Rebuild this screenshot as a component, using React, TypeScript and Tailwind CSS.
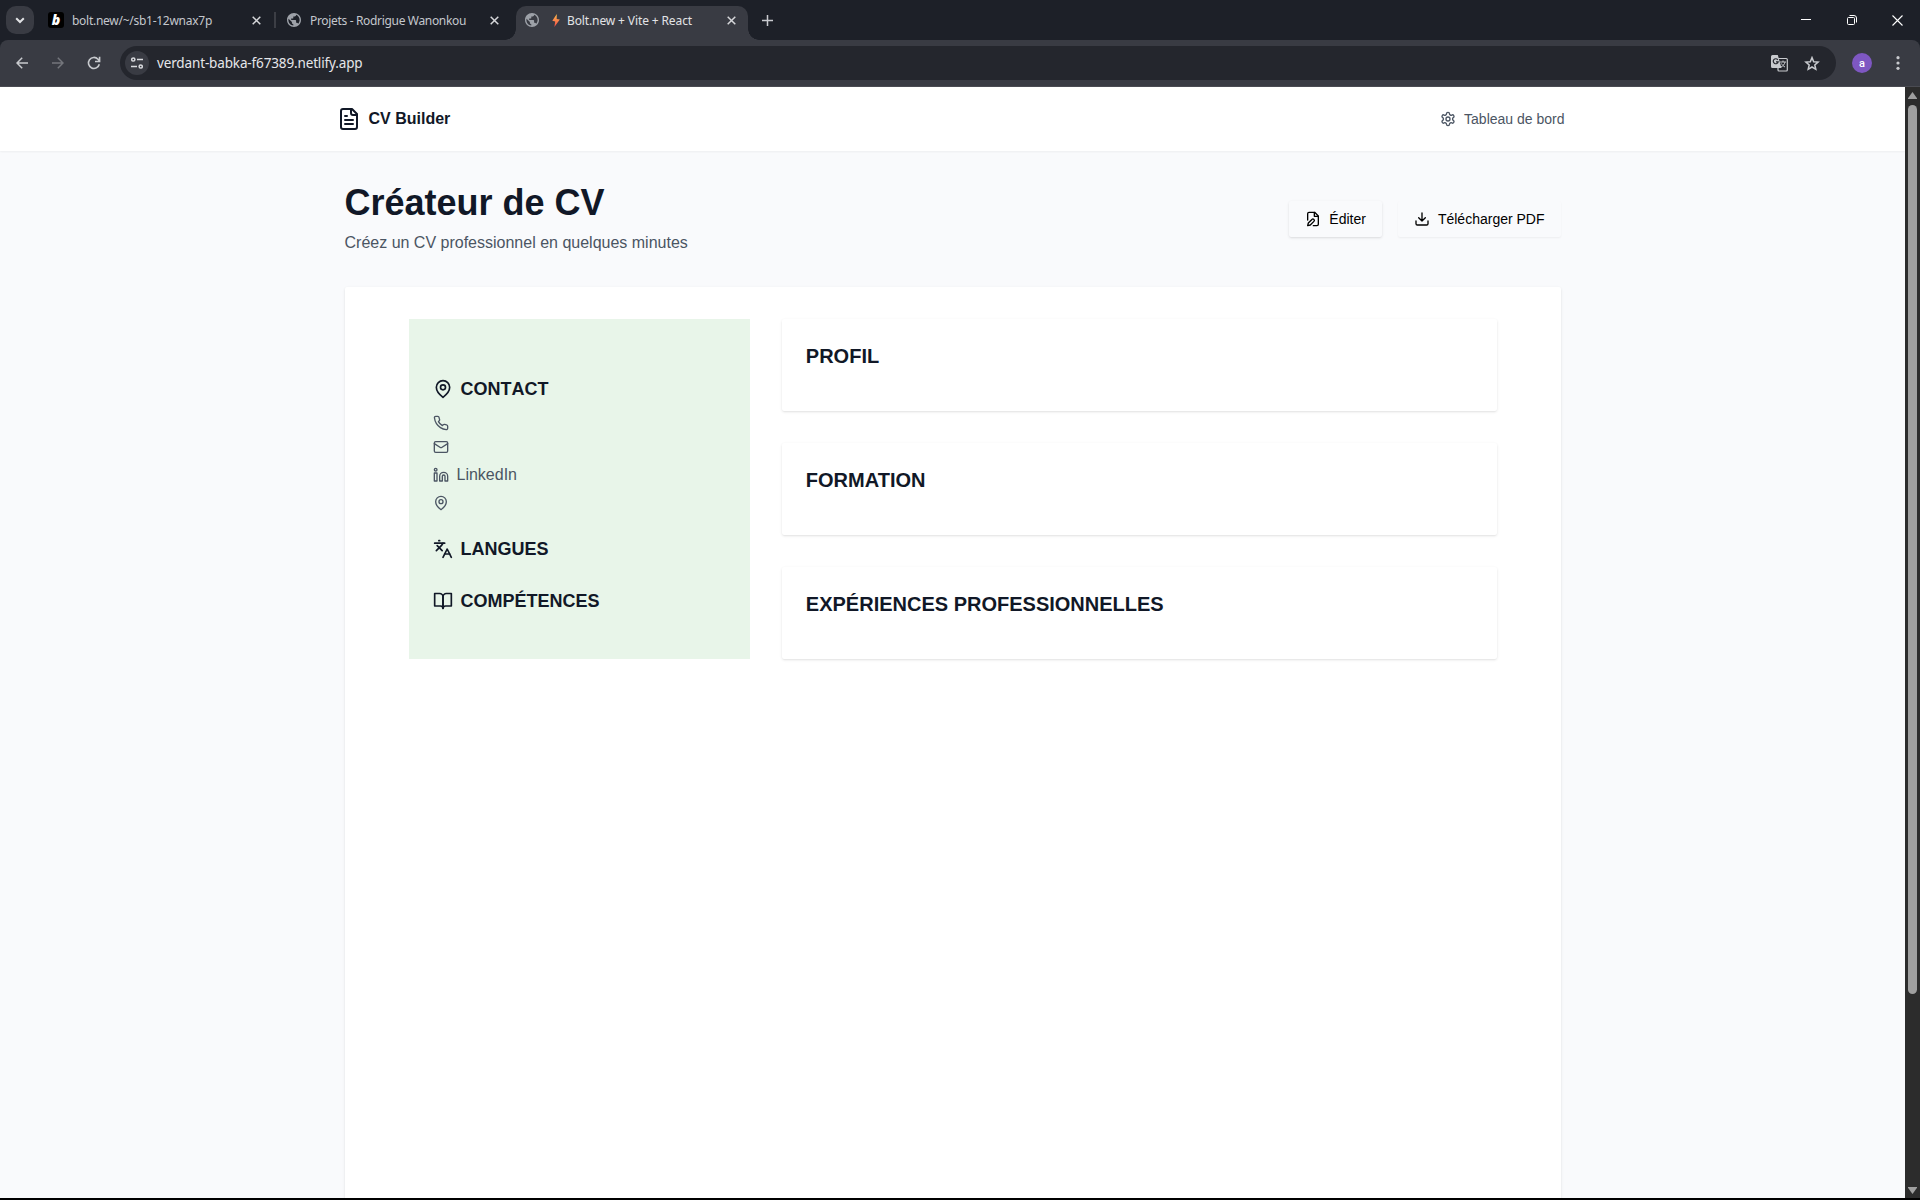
import React from 'react';
import { Languages, Linkedin } from 'lucide-react';

function Icon({ size, children }: { size: number; children: React.ReactNode }) {
  return (
    <svg width={size} height={size} viewBox="0 0 24 24" className="shrink-0" fill="none" stroke="currentColor" strokeWidth="2" strokeLinecap="round" strokeLinejoin="round">
      {children}
    </svg>
  );
}

const FileText = ({ size }: { size: number }) => (
  <Icon size={size}><path d="M15 2H6a2 2 0 0 0-2 2v16a2 2 0 0 0 2 2h12a2 2 0 0 0 2-2V7Z" /><path d="M14 2v4a2 2 0 0 0 2 2h4M10 9H8M16 13H8M16 17H8" /></Icon>
);

const Settings = ({ size }: { size: number }) => (
  <Icon size={size}><path d="M12.220 2h-.44a2 2 0 0 0-2 2v.18a2 2 0 0 1-1 1.730l-.43.25a2 2 0 0 1-2 0l-.15-.08a2 2 0 0 0-2.730.730l-.22.38a2 2 0 0 0 .730 2.730l.15.100a2 2 0 0 1 1 1.720v.510a2 2 0 0 1-1 1.740l-.15.090a2 2 0 0 0-.730 2.730l.22.380a2 2 0 0 0 2.730.730l.150-.080a2 2 0 0 1 2 0l.430.250a2 2 0 0 1 1 1.730V20a2 2 0 0 0 2 2h.440a2 2 0 0 0 2-2v-.180a2 2 0 0 1 1-1.730l.430-.250a2 2 0 0 1 2 0l.150.080a2 2 0 0 0 2.730-.730l.220-.390a2 2 0 0 0-.730-2.730l-.150-.080a2 2 0 0 1-1-1.740v-.500a2 2 0 0 1 1-1.740l.150-.090a2 2 0 0 0 .730-2.730l-.220-.380a2 2 0 0 0-2.730-.730l-.150.080a2 2 0 0 1-2 0l-.430-.250a2 2 0 0 1-1-1.730V4a2 2 0 0 0-2-2z" /><circle cx="12" cy="12" r="3" /></Icon>
);

const FileEdit = ({ size }: { size: number }) => (
  <Icon size={size}><path d="M4 13.500V4a2 2 0 0 1 2-2h8.500L20 7.500V20a2 2 0 0 1-2 2h-5.500" /><path d="M14 2v6h6" /><path d="M10.420 12.610a2.100 2.100 0 1 1 2.970 2.970L7.950 21 4 22l.990-3.950 5.430-5.440Z" /></Icon>
);

const Download = ({ size }: { size: number }) => (
  <Icon size={size}><path d="M21 15v4a2 2 0 0 1-2 2H5a2 2 0 0 1-2-2v-4" /><path d="M7 10l5 5 5-5M12 15V3" /></Icon>
);

const MapPin = ({ size }: { size: number }) => (
  <Icon size={size}><path d="M20 10c0 6-8 12-8 12s-8-6-8-12a8 8 0 0 1 16 0Z" /><circle cx="12" cy="10" r="3" /></Icon>
);

const Phone = ({ size }: { size: number }) => (
  <Icon size={size}><path d="M22 16.920v3a2 2 0 0 1-2.180 2 19.790 19.790 0 0 1-8.630-3.070 19.500 19.500 0 0 1-6-6 19.790 19.790 0 0 1-3.070-8.670A2 2 0 0 1 4.110 2h3a2 2 0 0 1 2 1.720 12.840 12.840 0 0 0 .7 2.810 2 2 0 0 1-.45 2.110L8.090 9.910a16 16 0 0 0 6 6l1.270-1.270a2 2 0 0 1 2.110-.45 12.840 12.840 0 0 0 2.810.7A2 2 0 0 1 22 16.920z" /></Icon>
);

const Mail = ({ size }: { size: number }) => (
  <Icon size={size}><rect width="20" height="16" x="2" y="4" rx="2" /><path d="m22 7-8.970 5.700a1.940 1.940 0 0 1-2.060 0L2 7" /></Icon>
);

const BookOpen = ({ size }: { size: number }) => (
  <Icon size={size}><path d="M2 3h6a4 4 0 0 1 4 4v14a3 3 0 0 0-3-3H2z" /><path d="M22 3h-6a4 4 0 0 0-4 4v14a3 3 0 0 1 3-3h7z" /></Icon>
);

function Globe() {
  return (
    <svg width="14" height="14" viewBox="2 2 20 20" className="shrink-0" fill="#9da1a8">
      <path d="M12 2C6.480 2 2 6.480 2 12s4.480 10 10 10 10-4.480 10-10S17.520 2 12 2zm-1 17.930c-3.950-.49-7-3.850-7-7.930 0-.62.080-1.210.210-1.790L9 15v1c0 1.100.9 2 2 2v1.930zm6.900-2.540c-.26-.81-1-1.390-1.900-1.390h-1v-3c0-.55-.45-1-1-1H8v-2h2c.55 0 1-.45 1-1V7h2c1.100 0 2-.9 2-2v-.41c2.930 1.190 5 4.060 5 7.410 0 2.080-.8 3.970-2.100 5.390z" />
    </svg>
  );
}

function TabClose() {
  return (
    <svg width="9" height="9" viewBox="0 0 9 9" className="shrink-0" fill="none" stroke="#d6d7da" strokeWidth="1.5">
      <path d="M.7.7l7.600 7.600M8.300.7L.7 8.300" />
    </svg>
  );
}

function TabStrip() {
  return (
    <div className="flex h-10 items-center bg-[#1d2028] text-[12px] text-[#c4c7cd]">
      <div className="ml-[6px] flex size-7 shrink-0 items-center justify-center rounded-[10px] bg-[#393b43]">
        <svg width="10" height="7" viewBox="0 0 10 7" fill="none" stroke="#e1e2e5" strokeWidth="2"><path d="M1.200 1.200L5 5l3.800-3.800" /></svg>
      </div>
      <div className="ml-[14px] flex w-[213px] shrink-0 items-center">
        <div className="flex size-4 shrink-0 items-center justify-center rounded-[3px] bg-black">
          <span className="text-[14px] leading-none font-black text-white italic">b</span>
        </div>
        <span className="ml-[8px] grow pt-[2px] tracking-[-0.27px] whitespace-nowrap">bolt.new/~/sb1-12wnax7p</span>
        <TabClose />
      </div>
      <div className="ml-[13px] h-4 w-[2px] shrink-0 bg-[#3c3e45]" />
      <div className="ml-[11px] flex w-[212px] shrink-0 items-center">
        <Globe />
        <span className="ml-[9px] grow pt-[2px] tracking-[-0.33px] whitespace-nowrap">Projets - Rodrigue Wanonkou</span>
        <TabClose />
      </div>
      <div className="flex h-10 w-[255px] shrink-0 items-end pl-[6px]">
        <div className="h-[11px] w-[11px] shrink-0 bg-[radial-gradient(circle_at_0_0,transparent_10.500px,#393b43_11px)]" />
        <div className="flex h-[34px] w-[232px] shrink-0 items-center rounded-t-[10px] bg-[#393b43] pr-[12px] pl-[9px] pb-[6px] text-[#e2e3e6]">
          <Globe />
          <svg width="8" height="13" viewBox="0 0 8 13" className="ml-[13px] shrink-0">
            <defs><linearGradient id="bolt" x1="0" y1="0" x2="0" y2="1"><stop stopColor="#ffc04a" /><stop offset="1" stopColor="#f4484a" /></linearGradient></defs>
            <path d="M4.800 0L.3 6.800l2.900.6L2.400 13 7.800 5.600l-3.100-.5Z" fill="url(#bolt)" />
          </svg>
          <span className="ml-[7px] grow pt-[2px] tracking-[-0.12px] whitespace-nowrap">Bolt.new + Vite + React</span>
          <TabClose />
        </div>
        <div className="h-[11px] w-[11px] shrink-0 bg-[radial-gradient(circle_at_100%_0,transparent_10.500px,#393b43_11px)]" />
      </div>
      <svg width="11" height="11" viewBox="0 0 11 11" className="ml-[8px] shrink-0" fill="none" stroke="#c9cacf" strokeWidth="1.500"><path d="M5.500 0v11M0 5.500h11" /></svg>
      <div className="grow" />
      <div className="mr-[17px] flex items-center text-white">
        <svg width="10" height="10" viewBox="0 0 10 10" stroke="currentColor" fill="none"><path d="M0 4.500h10" /></svg>
        <svg width="10" height="10" viewBox="0 0 10 10" className="ml-[36px]" stroke="currentColor" fill="none"><rect x=".5" y="2.500" width="7" height="7" rx="1" /><path d="M2.500.5H7A2.500 2.500 0 0 1 9.500 3v4.500" /></svg>
        <svg width="11" height="11" viewBox="0 0 11 11" className="ml-[35px]" stroke="currentColor" fill="none" strokeWidth="1.100"><path d="M.5.5l10 10M10.500.5l-10 10" /></svg>
      </div>
    </div>
  );
}

function Toolbar() {
  return (
    <div className="bg-[#1d2028]">
      <div className="flex h-[47px] items-center rounded-t-[8px] border-b border-[#4a4b52] bg-[#393b43] text-[#c8cace]">
        <svg width="12" height="12" viewBox="0 0 12 12" className="ml-[16px] shrink-0" fill="none" stroke="currentColor" strokeWidth="1.500"><path d="M12 6H1.200M6.200.8L1 6l5.200 5.200" /></svg>
        <svg width="12" height="12" viewBox="0 0 12 12" className="ml-[24px] shrink-0" fill="none" stroke="#74767c" strokeWidth="1.500"><path d="M0 6h10.800M5.800.8L11 6l-5.200 5.200" /></svg>
        <svg width="14" height="14" viewBox="0 0 14 14" className="ml-[23px] shrink-0" fill="none" stroke="currentColor" strokeWidth="1.600"><path d="M12.300 8.200A5.500 5.500 0 1 1 11 3.200L12.500 5M12.600.8v4.700H8" /></svg>
        <div className="ml-[19px] flex h-[34px] w-[1716px] shrink-0 items-center rounded-full bg-[#24262d] pr-[16px] pl-[5px]">
          <div className="flex size-6 shrink-0 items-center justify-center rounded-full bg-[#393b43]">
            <svg width="12" height="12" viewBox="0 0 12 12" fill="none" stroke="#d9dade" strokeWidth="1.500"><circle cx="2.300" cy="2.500" r="1.600" /><path d="M6 2.500h6M0 9.500h6" /><circle cx="9.700" cy="9.500" r="1.600" /></svg>
          </div>
          <span className="ml-[8px] grow text-[13.5px] tracking-[-0.14px] whitespace-nowrap text-[#e6e7ea]">verdant-babka-f67389.netlify.app</span>
          <svg width="17" height="17" viewBox="0 0 17 17" className="mt-px shrink-0">
            <rect x="7" y="3.500" width="9.300" height="12.500" rx="1" fill="none" stroke="#c8cace" strokeWidth="1.200" />
            <path d="M9 7h6M12 5.500V7M14 7c-.5 2.500-2 4-4 5M10.500 8.500c.8 1.700 2 2.700 3.500 3.500" fill="none" stroke="#c8cace" />
            <path d="M1.500 0h5.300l3.700 13H1.500A1.500 1.500 0 0 1 0 11.500v-10A1.500 1.500 0 0 1 1.500 0Z" fill="#c8cace" />
            <path d="M6.800 4.800a2.500 2.500 0 1 0 .4 2H5" fill="none" stroke="#24262d" strokeWidth="1.200" />
          </svg>
          <svg width="16" height="15" viewBox="0 0 16 15" className="ml-[16px] shrink-0" fill="none" stroke="#c8cace" strokeWidth="1.500"><path d="M8 1.600l1.700 4.100 4.400.4-3.300 2.900 1 4.300L8 11l-3.800 2.300 1-4.300L1.900 6.100l4.400-.4Z" /></svg>
        </div>
        <div className="ml-[16px] flex size-5 shrink-0 items-center justify-center rounded-full bg-[#7e57c2] font-['Roboto',sans-serif] text-[11px] leading-none font-medium text-white">a</div>
        <svg width="4" height="14" viewBox="0 0 4 14" className="ml-[24px] shrink-0" fill="#c8cace"><circle cx="2" cy="1.700" r="1.600" /><circle cx="2" cy="7" r="1.600" /><circle cx="2" cy="12.300" r="1.600" /></svg>
      </div>
    </div>
  );
}

function SideHeading({ icon, children }: { icon: React.ReactNode; children: React.ReactNode }) {
  return <h2 className="flex items-center gap-2 text-lg font-bold text-[#111827] [font-kerning:none]">{icon}{children}</h2>;
}

function Section({ title }: { title: string }) {
  return (
    <section className="h-[92px] rounded-[2px] bg-white p-6 shadow-[0_1px_3px_rgba(0,0,0,0.1),0_1px_2px_-1px_rgba(0,0,0,0.1)]">
      <h2 className="text-xl leading-[26px] font-bold text-[#111827]">{title}</h2>
    </section>
  );
}

function CvPage() {
  return (
    <div className="grow overflow-hidden bg-[#f9fafc]">
      <nav className="relative h-16 bg-white shadow-[0_1px_2px_rgba(0,0,0,0.05)]">
        <div className="mx-auto flex h-full max-w-7xl items-center justify-between pr-[28px] pl-6">
          <div className="flex items-center gap-2 text-base font-bold text-[#111827]"><FileText size={24} />CV Builder</div>
          <div className="flex items-center gap-2 text-sm text-[#4b5563]"><Settings size={16} />Tableau de bord</div>
        </div>
      </nav>
      <main className="mx-auto max-w-7xl px-8 py-8">
        <div className="mb-8 flex items-center justify-between">
          <div>
            <h1 className="text-4xl font-bold text-[#111827]">Créateur de CV</h1>
            <p className="mt-2 text-base text-[#4b5563]">Créez un CV professionnel en quelques minutes</p>
          </div>
          <div className="flex gap-4 text-sm text-black">
            <button className="flex h-9 items-center gap-2 rounded-[2px] bg-[#f9fafc] px-4 shadow-[0_1px_3px_rgba(0,0,0,0.1),0_1px_2px_-1px_rgba(0,0,0,0.1)]"><FileEdit size={16} />Éditer</button>
            <button className="flex h-9 items-center gap-2 rounded-[2px] bg-[#f9fafc] px-4 shadow-[0_1px_2px_rgba(0,0,0,0.05)]"><Download size={16} />Télécharger PDF</button>
          </div>
        </div>
        <div className="grid h-[1123px] grid-cols-3 content-start gap-8 rounded-[2px] bg-white px-16 py-8 shadow-[0_1px_3px_rgba(0,0,0,0.1),0_1px_2px_-1px_rgba(0,0,0,0.1)]">
          <aside className="bg-[#e8f5e9] px-6 pt-14">
            <SideHeading icon={<MapPin size={20} />}>CONTACT</SideHeading>
            <div className="mt-3 mb-6 flex flex-col gap-2 text-base text-[#4b5563]">
              <Phone size={16} />
              <Mail size={16} />
              <div className="flex items-center gap-2"><Linkedin size={16} />LinkedIn</div>
              <MapPin size={16} />
            </div>
            <SideHeading icon={<Languages size={20} />}>LANGUES</SideHeading>
            <div className="h-6" />
            <SideHeading icon={<BookOpen size={20} />}>COMPÉTENCES</SideHeading>
          </aside>
          <div className="col-span-2 flex flex-col gap-8">
            <Section title="PROFIL" />
            <Section title="FORMATION" />
            <Section title="EXPÉRIENCES PROFESSIONNELLES" />
          </div>
        </div>
      </main>
    </div>
  );
}

function Scrollbar() {
  return (
    <div className="flex w-[15px] shrink-0 flex-col items-center bg-[#2c2c2c]">
      <svg width="9" height="7" viewBox="0 0 9 7" className="mt-[5px] shrink-0" fill="#9f9f9f"><path d="M4.500 0L9 6.200V7H0v-.8Z" /></svg>
      <div className="mt-[6px] h-[889px] w-[9px] shrink-0 rounded-full bg-[#9f9f9f]" />
      <div className="grow" />
      <svg width="9" height="7" viewBox="0 0 9 7" className="mb-[4px] shrink-0" fill="#9f9f9f"><path d="M4.500 7L9 .8V0H0v.8Z" /></svg>
    </div>
  );
}

export default function App() {
  return (
    <div className="flex h-[1200px] w-[1920px] flex-col overflow-hidden border-b-2 border-black bg-white font-['Liberation_Sans',Arial,sans-serif]">
      <header className="shrink-0 font-['Noto_Sans','Open_Sans',sans-serif]">
        <TabStrip />
        <Toolbar />
      </header>
      <div className="flex min-h-0 grow">
        <CvPage />
        <Scrollbar />
      </div>
    </div>
  );
}
